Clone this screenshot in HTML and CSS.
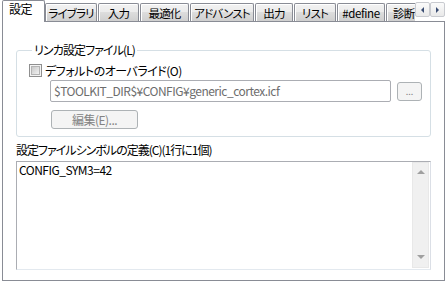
FILE: index.html
```html
<!DOCTYPE html>
<html lang="ja">
  <head>
    <meta charset="UTF-8" />
    <title>設定</title>
    <link rel="stylesheet" href="styles.css">
  </head>
  <body>
    <div class="tab-strip">
      <div class="tab-list">
        <div class="tab active">設定</div>
        <div class="tab">ライブラリ</div>
        <div class="tab">入力</div>
        <div class="tab">最適化</div>
        <div class="tab">アドバンスト</div>
        <div class="tab">出力</div>
        <div class="tab">リスト</div>
        <div class="tab">#define</div>
        <div class="tab">診断</div>
      </div>
      <div class="tab-scroll">
        <span class="scroll-btn"><span class="arrow left"></span></span>
        <span class="scroll-btn"><span class="arrow right"></span></span>
      </div>
    </div>
    <div class="panel">
      <fieldset class="group">
        <legend>リンカ設定ファイル(L)</legend>
        <label class="check-row">
          <span class="checkbox"><span class="check-inner"></span></span>
          <span>デフォルトのオーバライド(O)</span>
        </label>
        <div class="path-row">
          <div class="path-field">$TOOLKIT_DIR$¥CONFIG¥generic_cortex.icf</div>
          <button class="btn small-btn" disabled>...</button>
        </div>
        <button class="btn edit-btn" disabled>編集(E)...</button>
      </fieldset>
      <div class="field-label">設定ファイルシンボルの定義(C)(1行に1個)</div>
      <div class="text-box">
        <div class="text-content">CONFIG_SYM3=42</div>
        <div class="v-scroll">
          <span class="arrow up"></span>
          <span class="arrow down"></span>
        </div>
      </div>
    </div>
  </body>
</html>
```

FILE: styles.css
```css
* {
  box-sizing: border-box;
}
body {
  margin: 0;
  width: 446px;
  height: 281px;
  background: #fff;
  font-family: "Noto Sans CJK JP", sans-serif;
  font-size: 12px;
  font-feature-settings: "palt";
  letter-spacing: -0.5px;
  color: #000;
  overflow: hidden;
}
/* Tabs */
.tab-strip {
  display: flex;
  height: 22px;
  margin-bottom: -1px;
  position: relative;
  z-index: 1;
}
.tab-list {
  display: flex;
  align-items: flex-end;
  width: 415px;
  padding-left: 2px;
  overflow: hidden;
  flex-shrink: 0;
}
.tab {
  flex-shrink: 0;
  height: 18px;
  margin-bottom: 1px;
  padding: 1px 0 0;
  line-height: 17px;
  font-size: 11.5px;
  letter-spacing: -0.8px;
  text-align: center;
  border: 1px solid #898c95;
  border-bottom: none;
  border-radius: 2px 2px 0 0;
  background: linear-gradient(#f2f2f2, #ebebeb 50%, #dddddd 50%, #cfcfcf);
  box-shadow: inset 1px 1px 0 #fff;
  white-space: nowrap;
}
.tab + .tab {
  margin-left: 1px;
}
.tab.active {
  width: 43px;
  height: 22px;
  margin-bottom: 0;
  padding: 0 8px 0 6px;
  line-height: 16px;
  font-size: 12px;
  letter-spacing: -0.5px;
  text-align: left;
  background: #fff;
  box-shadow: none;
}
.tab.active + .tab {
  margin-left: 0;
}
.tab:nth-child(2) { width: 52px; }
.tab:nth-child(3) { width: 41px; }
.tab:nth-child(4) { width: 49px; }
.tab:nth-child(5) { width: 64px; }
.tab:nth-child(6) { width: 38px; }
.tab:nth-child(7) { width: 42px; }
.tab:nth-child(8) { width: 48px; letter-spacing: -0.4px; }
.tab:nth-child(9) { width: 42px; text-align: left; padding-left: 6px; }
.tab-scroll {
  display: flex;
  flex-shrink: 0;
  margin-top: 2px;
  height: 15px;
}
.scroll-btn {
  display: flex;
  align-items: center;
  justify-content: center;
  width: 15px;
  height: 15px;
  border: 1px solid #c9cbd0;
  border-radius: 2px;
  background: linear-gradient(#fbfbfb, #e9e9e9);
}
.arrow {
  width: 0;
  height: 0;
  border: 3px solid transparent;
}
.arrow.left {
  border-right-color: #3a4d73;
  border-left-width: 0;
}
.arrow.right {
  border-left-color: #3a4d73;
  border-right-width: 0;
}
/* Panel */
.panel {
  margin-left: 2px;
  width: 443px;
  height: 260px;
  border: 1px solid #898c95;
  padding: 22px 13px 0;
  display: flex;
  flex-direction: column;
}
.group {
  margin: 0;
  padding: 7px 8px 7px 12px;
  min-width: 0;
  border: 1px solid #d5dfe5;
  border-radius: 3px;
  display: flex;
  flex-direction: column;
  align-items: flex-start;
}
.group legend {
  padding: 0 2px;
  margin-left: 3px;
  line-height: 12px;
  letter-spacing: -0.9px;
}
.check-row {
  display: flex;
  align-items: center;
  gap: 3px;
  height: 14px;
}
.checkbox {
  width: 13px;
  height: 13px;
  border: 1px solid #8f8f8f;
  padding: 1px;
  background: #f4f4f4;
}
.check-inner {
  display: block;
  width: 9px;
  height: 9px;
  border: 1px solid #b4b4b4;
  background: linear-gradient(135deg, #c9c9c9, #f2f2f2);
}
.path-row {
  display: flex;
  align-items: center;
  gap: 6px;
  align-self: stretch;
  margin: 3px 0 0 21px;
}
.path-field {
  flex: 1;
  height: 22px;
  padding: 0 3px;
  line-height: 20px;
  border: 1px solid #abadb3;
  border-radius: 2px;
  color: #6d6d6d;
  white-space: nowrap;
  overflow: hidden;
}
.btn {
  font: inherit;
  font-feature-settings: "palt";
  letter-spacing: -0.5px;
  color: #838383;
  border: 1px solid #adb2b5;
  border-radius: 3px;
  background: #f4f4f4;
  padding: 0;
  height: 19px;
  line-height: 17px;
}
.small-btn {
  width: 25px;
  font-size: 9px;
  letter-spacing: 0;
}
.edit-btn {
  width: 87px;
  margin: 8px 0 0 22px;
}
.field-label {
  margin-top: 6px;
  line-height: 14px;
  letter-spacing: -1px;
}
.text-box {
  display: flex;
  margin-top: 4px;
  width: 415px;
  height: 109px;
  border: 1px solid #abadb3;
  border-right-color: #dbdfe6;
  border-bottom-color: #e3e9ef;
}
.text-content {
  flex: 1;
  padding: 1px 2px;
  line-height: 14px;
}
.v-scroll {
  width: 17px;
  margin: 0 1px 1px 0;
  border: 1px solid #e8e8e8;
  background: #f0f0f0;
  display: flex;
  flex-direction: column;
  justify-content: space-between;
  align-items: center;
  padding: 7px 0 8px;
}
.arrow.up {
  border-width: 0 4px 4px;
  border-bottom-color: #a0a0a0;
}
.arrow.down {
  border-width: 4px 4px 0;
  border-top-color: #a0a0a0;
}
```
